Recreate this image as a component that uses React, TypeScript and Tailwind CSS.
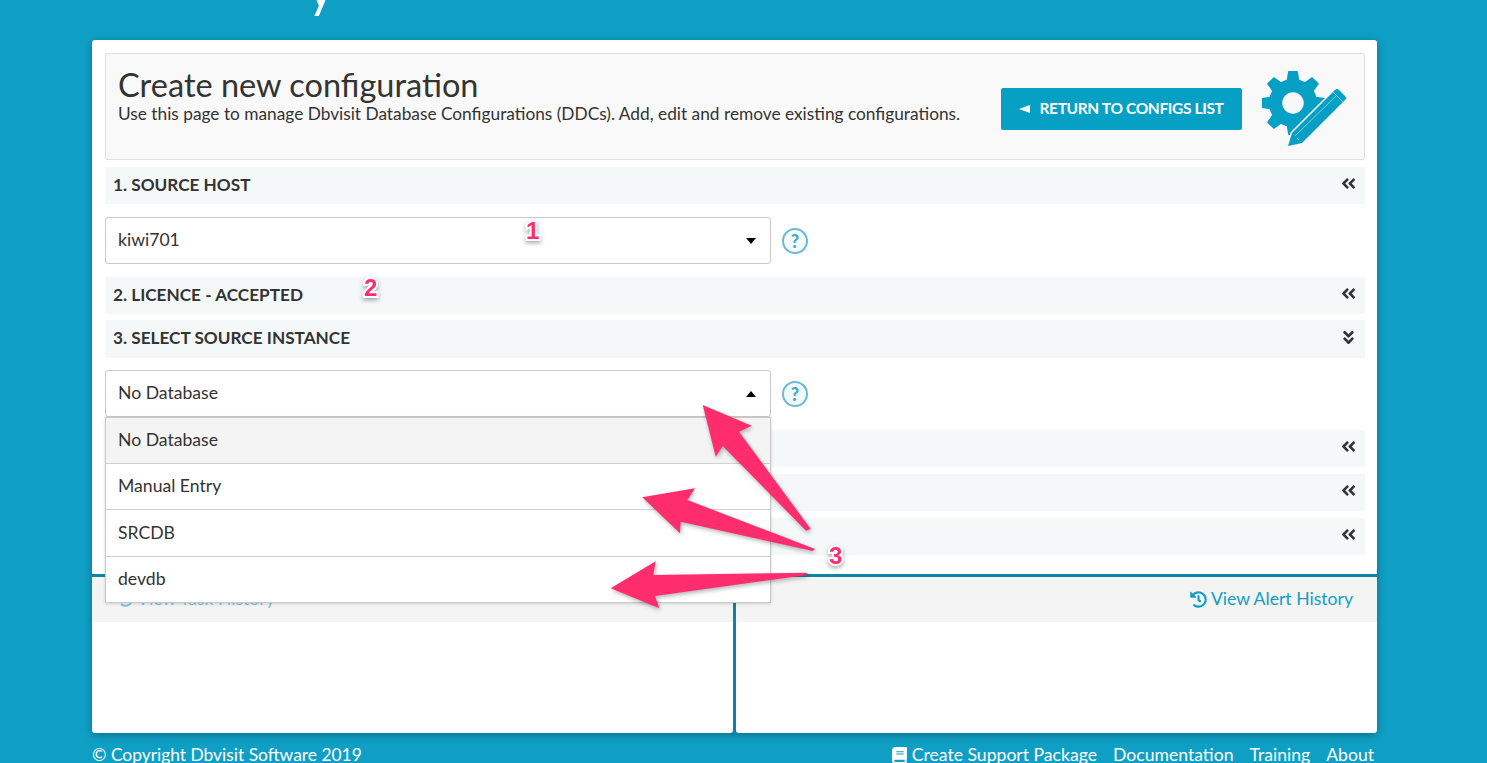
import { FaAngleDoubleDown, FaAngleDoubleLeft, FaBook, FaHistory } from 'react-icons/fa'

const gearPath = () => {
  // 8 tooth gear, drawn around (31, 32)
  const teeth = 8
  const points: string[] = []
  for (let i = 0; i < teeth; i++) {
    const a = (i / teeth) * Math.PI * 2 - Math.PI / 2
    const step = (Math.PI * 2) / teeth
    const at = (r: number, d: number) =>
      `${(31 + r * Math.cos(a + d)).toFixed(2)} ${(32 + r * Math.sin(a + d)).toFixed(2)}`
    points.push(`${i === 0 ? 'M' : 'L'}${at(23.5, -step * 0.3)}`)
    points.push(`L${at(31.5, -step * 0.17)}`)
    points.push(`L${at(31.5, step * 0.17)}`)
    points.push(`L${at(23.5, step * 0.3)}`)
  }
  return points.join(' ') + ' Z M31 20.5 A11.5 11.5 0 1 0 31 43.5 A11.5 11.5 0 1 0 31 20.5 Z'
}

function ConfigIcon() {
  return (
    <svg viewBox="0 0 86 76" className="w-[86px] h-[76px]">
      <path d={gearPath()} fill="#05a0c4" fillRule="evenodd" stroke="#05a0c4" strokeWidth="1.5" strokeLinejoin="round" />
      <path d="M26 75 L30 62 L73 19 Q75 17 77 19 L83 25 Q85 27 83 29 L40 72 Z" fill="#05a0c4" stroke="#f9f9f9" strokeWidth="3" paintOrder="stroke" />
      <path d="M33 65 L75 24 M37 69 L35 67" stroke="#7fcde0" strokeWidth="1" fill="none" />
      <path d="M71 21 L81 31" stroke="#7fcde0" strokeWidth="1" fill="none" />
    </svg>
  )
}

function HelpIcon() {
  return (
    <span className="ml-[11px] w-[26px] h-[26px] rounded-full border-2 border-[#6db9d8] bg-[#f3fafc] flex items-center justify-center text-[18px] font-black text-[#4aa5cf] leading-none">
      ?
    </span>
  )
}

function Section({ title, open, tall }: { title: string; open?: boolean; tall?: boolean }) {
  return (
    <div className={`flex items-center justify-between bg-[#f5f8f9] pl-2 pr-2 ${tall ? 'h-[38px]' : 'h-[37px]'}`}>
      <span className="text-[17.2px] font-bold text-[#333] -mt-[2px]">{title}</span>
      {open ? (
        <FaAngleDoubleDown className="text-[#333] text-[17px] -mt-1" />
      ) : (
        <FaAngleDoubleLeft className="text-[#333] text-[17px] -mt-1" />
      )}
    </div>
  )
}

function Select({ value, up }: { value: string; up?: boolean }) {
  return (
    <div className="flex items-center">
      <div className="w-[666px] h-[47px] border border-[#c9c9c9] rounded-[3px] bg-white flex items-center justify-between pl-3 pr-[14px] text-[17.6px] text-[#333]">
        {value}
        <span
          className={
            up
              ? 'w-0 h-0 border-x-[5.5px] border-x-transparent border-b-[6px] border-b-black'
              : 'w-0 h-0 border-x-[5.5px] border-x-transparent border-t-[6px] border-t-black'
          }
        />
      </div>
      <HelpIcon />
    </div>
  )
}

const options = [
  { label: 'No Database', row: 'h-[45px] bg-[#f4f4f4]' },
  { label: 'Manual Entry', row: 'h-[46px] border-t border-[#d0d0d0]' },
  { label: 'SRCDB', row: 'h-[47px] border-t border-[#d0d0d0]' },
  { label: 'devdb', row: 'h-[46px] border-t border-[#d0d0d0]' },
]

const numberClass =
  'absolute font-["Liberation_Sans",sans-serif] font-bold text-[24px] leading-none text-[#ff2d6d] [-webkit-text-stroke:4px_#fff] [paint-order:stroke_fill] drop-shadow-[0_2px_2px_rgba(0,0,0,0.35)]'

export default function App() {
  return (
    <div className="relative h-[763px] overflow-hidden bg-[#0f9fc5] pl-[92px] pr-[110px] font-['Lato',sans-serif] text-[#333]">
      <div className="h-10 overflow-hidden pl-[216px]">
        <div className="text-[50px] leading-none text-white -mt-[37px]">y</div>
      </div>

      <div className="relative bg-[#0a86a4] shadow-[0_2px_8px_rgba(0,0,0,0.3)] rounded-[3px]">
        <div className="bg-white rounded-t-[3px] pl-[13px] pr-3 pt-[13px] h-[534px] flex flex-col">
          <div className="h-[107px] shrink-0 border border-[#e0e0e0] rounded-[2px] bg-[#f9f9f9] flex items-center pl-3 pr-4">
            <div className="flex-1 -mt-[24px]">
              <h1 className="text-[32.5px] leading-[38px] text-[#333]">Create new configuration</h1>
              <p className="text-[17.3px] leading-[20px] text-[#333]">
                Use this page to manage Dbvisit Database Configurations (DDCs). Add, edit and remove existing configurations.
              </p>
            </div>
            <button className="w-[241px] h-[42px] mr-5 mt-[5px] rounded-[2px] bg-[#05a0c4] text-white text-[15.5px] tracking-[-0.36px] font-bold flex items-center justify-center gap-[9px]">
              <span className="w-0 h-0 border-y-[4px] border-y-transparent border-r-[11px] border-r-white" />
              RETURN TO CONFIGS LIST
            </button>
            <div className="mt-[5px]">
              <ConfigIcon />
            </div>
          </div>

          <div className="mt-[7px]">
            <Section title="1. SOURCE HOST" />
          </div>
          <div className="mt-[13px]">
            <Select value="kiwi701" />
          </div>
          <div className="mt-[13px]">
            <Section title="2. LICENCE - ACCEPTED" />
          </div>
          <div className="mt-[6px]">
            <Section title="3. SELECT SOURCE INSTANCE" open tall />
          </div>
          <div className="mt-3">
            <Select value="No Database" up />
          </div>
          <div className="mt-[13px] flex flex-col gap-[7px]">
            <Section title="4. SELECT TARGET HOST" />
            <Section title="5. SELECT TARGET INSTANCE" />
            <Section title="6. REVIEW" />
          </div>
        </div>

        <div className="grid grid-cols-2 gap-[3px] pt-[3px]">
          <div className="h-[156px] bg-white rounded-b-[3px]">
            <div className="h-[45px] bg-[#f4f4f4] flex items-center pl-[26px] text-[17.6px] text-[#7cc6dc] gap-1">
              <FaHistory className="text-[15px]" />
              View Task History
            </div>
          </div>
          <div className="h-[156px] bg-white rounded-b-[3px]">
            <div className="h-[45px] bg-[#f4f4f4] flex items-center justify-end pr-6 text-[17.6px] text-[#0f9fc5] gap-1">
              <FaHistory className="text-[17px]" />
              View Alert History
            </div>
          </div>
        </div>
      </div>

      <div className="flex items-center justify-between mt-[12px] pr-[3px] text-[17.4px] leading-5 text-white">
        <span>© Copyright Dbvisit Software 2019</span>
        <div className="flex items-center gap-4 text-[17.6px]">
          <span className="flex items-center gap-1">
            <FaBook className="text-[17px]" />
            Create Support Package
          </span>
          <span>Documentation</span>
          <span>Training</span>
          <span>About</span>
        </div>
      </div>

      <div className="absolute left-[105px] top-[417px] w-[666px] bg-white border border-[#c9c9c9] shadow-[0_1px_3px_rgba(0,0,0,0.15)]">
        {options.map(o => (
          <div key={o.label} className={`flex items-center pl-3 text-[17.6px] text-[#333] ${o.row}`}>
            {o.label}
          </div>
        ))}
      </div>

      <svg className="absolute inset-0 w-[1487px] h-[763px] pointer-events-none drop-shadow-[1px_2px_2px_rgba(0,0,0,0.3)]" viewBox="0 0 1487 763">
        <g fill="#ff2d6d">
          <path d="M702.7 405 L751.7 425.7 L739 431.7 L810.7 529 L806 530.7 L722.7 446 L715.7 456.7 Z" />
          <path d="M642.3 497.3 L695 488.3 L687.3 500 L815 549 L812.7 551 L680.7 521.7 L680 533.3 Z" />
          <path d="M610.7 588.3 L655.7 561.3 L653.3 575 L806.7 572.7 L807 575 L655 596 L659.3 608.3 Z" />
        </g>
      </svg>

      <span className={`${numberClass} left-[526px] top-[219px]`}>1</span>
      <span className={`${numberClass} left-[364px] top-[276px]`}>2</span>
      <span className={`${numberClass} left-[829px] top-[544px]`}>3</span>
    </div>
  )
}
